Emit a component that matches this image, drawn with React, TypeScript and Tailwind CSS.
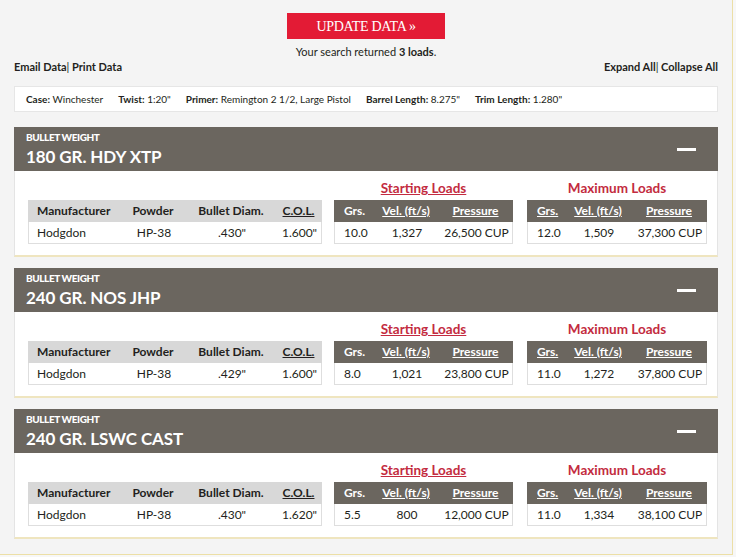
import React from "react";

type Load = [string, string, string];
type Card = { title: string; diam: string; col: string; s: Load; m: Load };

const cards: Card[] = [
  { title: "180 GR. HDY XTP", diam: '.430"', col: '1.600"', s: ["10.0", "1,327", "26,500 CUP"], m: ["12.0", "1,509", "37,300 CUP"] },
  { title: "240 GR. NOS JHP", diam: '.429"', col: '1.600"', s: ["8.0", "1,021", "23,800 CUP"], m: ["11.0", "1,272", "37,800 CUP"] },
  { title: "240 GR. LSWC CAST", diam: '.430"', col: '1.620"', s: ["5.5", "800", "12,000 CUP"], m: ["11.0", "1,334", "38,100 CUP"] },
];

function LoadTable({ data, grsUnderline, cols }: { data: Load; grsUnderline: boolean; cols: string }) {
  return (
    <div>
      <div className={`grid ${cols} h-[22px] items-center bg-[#6b665f] text-white font-bold text-[12px]`}>
        <span className={`pl-[10px] ${grsUnderline ? "underline" : ""}`}>Grs.</span>
        <span className="text-center underline">Vel. (ft/s)</span>
        <span className="text-center underline">Pressure</span>
      </div>
      <div className={`grid ${cols} h-[22px] items-center bg-white border border-t-0 border-[#dedede] text-[12px] text-[#231f20]`}>
        <span className="pl-[9px]">{data[0]}</span>
        <span className="text-center">{data[1]}</span>
        <span className="text-center">{data[2]}</span>
      </div>
    </div>
  );
}

function CardView({ c }: { c: Card }) {
  return (
    <div className="mt-[11px] first:mt-0">
      <div className="relative h-[44px] bg-[#6b665f] pl-[12px] pt-[4px] text-white">
        <div className="text-[10px] leading-[12px] font-black tracking-[-0.4px]">BULLET WEIGHT</div>
        <div className="mt-[3px] text-[17px] leading-[21px] font-bold tracking-[-0.1px]">{c.title}</div>
        <div className="absolute right-[22px] top-[21px] h-[3px] w-[19px] bg-white" />
      </div>
      <div className="flex bg-white border-x border-[#e4e4e4] border-b-2 border-b-[#efe5bf] pl-[13px] pt-[8px] pb-[11px]">
        <div className="w-[294px] pt-[21px]">
          <div className="grid grid-cols-[91px_68px_88px_47px] h-[22px] items-center bg-[#d8d8d8] font-bold text-[12px] text-[#231f20]">
            <span className="pl-[9px]">Manufacturer</span>
            <span className="text-center">Powder</span>
            <span className="text-center">Bullet Diam.</span>
            <span className="text-center underline">C.O.L.</span>
          </div>
          <div className="grid grid-cols-[91px_68px_88px_47px] h-[22px] items-center bg-white border border-t-0 border-[#dedede] text-[12px] text-[#231f20]">
            <span className="pl-[8px]">Hodgdon</span>
            <span className="text-center">HP-38</span>
            <span className="text-center">{c.diam}</span>
            <span className="text-center">{c.col}</span>
          </div>
        </div>
        <div className="ml-[12px] w-[179px]">
          <div className="h-[18px] leading-[18px] mb-[3px] text-center text-[13.5px] font-bold text-[#c32b40] underline">Starting Loads</div>
          <LoadTable data={c.s} grsUnderline={false} cols="grid-cols-[40px_64px_75px]" />
        </div>
        <div className="ml-[14px] w-[180px]">
          <div className="h-[18px] leading-[18px] mb-[3px] text-center text-[13.5px] font-bold text-[#c32b40]">Maximum Loads</div>
          <LoadTable data={c.m} grsUnderline={true} cols="grid-cols-[38px_66px_76px]" />
        </div>
      </div>
    </div>
  );
}

export default function App() {
  return (
    <div className="min-h-[557px] w-[736px] bg-[#f7f7f7] font-['Lato',sans-serif] text-[#231f20]">
      <div className="w-[733px] bg-[#f4f4f4] border-r border-b border-[#ecdfa6] px-[14px] pt-[13px] pb-[15px]">
        <div className="flex justify-center">
          <div className="flex h-[26px] w-[158px] items-center justify-center bg-[#e31b35] text-white font-['Liberation_Serif',serif] text-[14px] tracking-[-0.3px]">
            UPDATE DATA »
          </div>
        </div>
        <div className="mt-[6px] text-center text-[11px] leading-[14px]">
          Your search returned <b>3 loads</b>.
        </div>
        <div className="mt-[1px] flex justify-between text-[11px] leading-[14px] font-bold">
          <div>
            Email Data<span className="font-normal">|</span> Print Data
          </div>
          <div>
            Expand All<span className="font-normal">|</span> Collapse All
          </div>
        </div>
        <div className="mt-[12px] flex h-[26px] items-center gap-[15px] bg-white border border-[#e6e6e6] pl-[11px] text-[10px]">
          <span><b>Case:</b> Winchester</span>
          <span><b>Twist:</b> 1:20"</span>
          <span><b>Primer:</b> Remington 2 1/2, Large Pistol</span>
          <span><b>Barrel Length:</b> 8.275"</span>
          <span><b>Trim Length:</b> 1.280"</span>
        </div>
        <div className="mt-[15px]">
          {cards.map((c) => (
            <CardView key={c.title} c={c} />
          ))}
        </div>
      </div>
    </div>
  );
}
